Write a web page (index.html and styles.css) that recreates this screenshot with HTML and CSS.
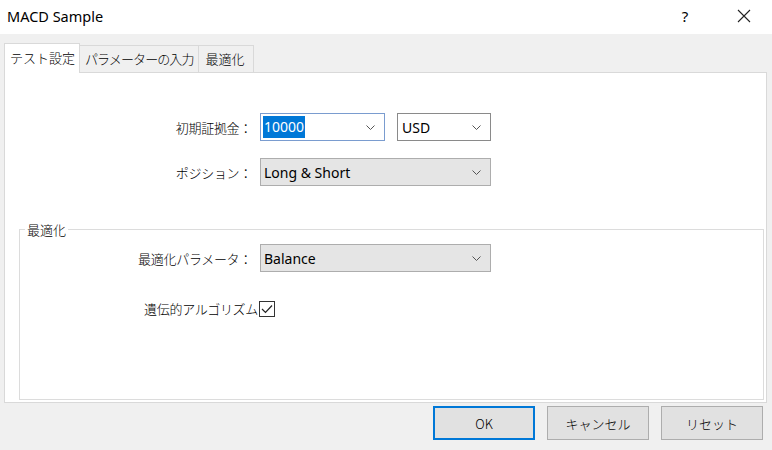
FILE: index.html
```html
<!DOCTYPE html>
<html lang="ja">
<head>
<meta charset="utf-8">
<title>MACD Sample</title>
<link rel="stylesheet" href="styles.css">
</head>
<body>
<div class="window">
  <header class="titlebar">
    <span class="title">MACD Sample</span>
    <div class="title-btns">
      <span class="help">?</span>
      <span class="close"><svg width="14" height="14" viewBox="0 0 14 14"><path d="M1 1 L13 13 M13 1 L1 13" stroke="#222" stroke-width="1.1" fill="none"/></svg></span>
    </div>
  </header>
  <div class="content">
    <div class="tabs">
      <div class="tab active">テスト設定</div>
      <div class="tab tab-param">パラメーターの入力</div>
      <div class="tab tab-opt">最適化</div>
    </div>
    <div class="panel">
      <div class="form top-form">
        <label class="lbl">初期証拠金：</label>
        <div class="pair">
          <div class="combo edit focus w125"><span class="val"><span class="sel">10000</span></span><svg class="chev" width="9" height="5" viewBox="0 0 9 5"><path d="M0.5 0.5 L4.5 4.5 L8.5 0.5" stroke="#555" stroke-width="1" fill="none"/></svg></div>
          <div class="combo edit w94"><span class="val">USD</span><svg class="chev" width="9" height="5" viewBox="0 0 9 5"><path d="M0.5 0.5 L4.5 4.5 L8.5 0.5" stroke="#555" stroke-width="1" fill="none"/></svg></div>
        </div>
        <label class="lbl">ポジション：</label>
        <div class="combo ro w231"><span class="val">Long &amp; Short</span><svg class="chev" width="9" height="5" viewBox="0 0 9 5"><path d="M0.5 0.5 L4.5 4.5 L8.5 0.5" stroke="#555" stroke-width="1" fill="none"/></svg></div>
      </div>
      <fieldset class="group">
        <legend>最適化</legend>
        <div class="form group-form">
          <label class="lbl">最適化パラメータ：</label>
          <div class="combo ro w231"><span class="val">Balance</span><svg class="chev" width="9" height="5" viewBox="0 0 9 5"><path d="M0.5 0.5 L4.5 4.5 L8.5 0.5" stroke="#555" stroke-width="1" fill="none"/></svg></div>
          <label class="lbl chk-lbl">遺伝的アルゴリズム</label>
          <div class="chk-cell"><span class="checkbox"><svg width="12" height="10" viewBox="0 0 12 10"><path d="M1 5 L4.5 8.5 L11 1.5" stroke="#222" stroke-width="1.2" fill="none"/></svg></span></div>
        </div>
      </fieldset>
    </div>
    <div class="buttons">
      <button class="btn default">OK</button>
      <button class="btn">キャンセル</button>
      <button class="btn">リセット</button>
    </div>
  </div>
</div>
</body>
</html>
```
FILE: styles.css
```css
* { box-sizing: border-box; }
html, body { margin: 0; padding: 0; }
body {
  width: 772px;
  height: 450px;
  overflow: hidden;
  background: #f0f0f0;
  font-family: "Noto Sans", "Noto Sans CJK JP", sans-serif;
  font-size: 13px;
  color: #000;
}
.window { width: 772px; height: 450px; display: flex; flex-direction: column; }
.titlebar {
  height: 34px;
  background: #fff;
  display: flex;
  align-items: center;
  justify-content: space-between;
  padding-left: 7px;
}
.title { font-size: 14.5px; font-family: "Noto Sans", sans-serif; margin-top: -2px; }
.title-btns { display: flex; align-items: center; height: 34px; }
.help {
  width: 46px; text-align: center; font-size: 15px;
  font-family: "Noto Sans", sans-serif; margin-top: -3px; margin-right: 13px;
}
.close { width: 46px; height: 34px; display: flex; align-items: center; justify-content: center; margin-right: 5px; margin-top: -2px; }
.content { padding: 0 5px 0 4px; flex: 1; display: flex; flex-direction: column; }
.tabs { display: flex; align-items: flex-end; height: 29px; margin-top: 9px; position: relative; z-index: 1; }
.tab {
  font-family: "Noto Sans CJK JP", sans-serif;
  font-size: 13px;
  font-weight: 300;
  height: 27px;
  line-height: 25px;
  padding: 0 5px;
  border: 1px solid #d9d9d9;
  border-bottom: none;
  border-left: none;
  background: #f0f0f0;
  color: #000;
  white-space: nowrap;
}
.tab.active {
  height: 30px;
  line-height: 28px;
  background: #fff;
  border-left: 1px solid #d9d9d9;
  margin-bottom: -1px;
  padding: 0 4px 0 5px;
}
.tab-param { letter-spacing: -0.9px; padding: 0 4px 0 5px; }
.tab-opt { padding: 0 8px 0 7px; }
.panel {
  height: 331px;
  background: #fff;
  border: 1px solid #d9d9d9;
  padding-top: 40px;
  display: flex;
  flex-direction: column;
}
.form { display: grid; column-gap: 8px; align-items: center; }
.top-form { grid-template-columns: 247px auto; row-gap: 17px; }
.group-form { grid-template-columns: 227px auto; row-gap: 22px; padding-top: 6px; }
.lbl {
  font-family: "Noto Sans CJK JP", sans-serif;
  font-size: 13px;
  font-weight: 300;
  text-align: right;
  white-space: nowrap;
  letter-spacing: -0.3px;
}
.pair { display: flex; gap: 12px; }
.combo {
  height: 28px;
  display: flex;
  align-items: center;
  justify-content: space-between;
  padding: 0 9px 0 2px;
  font-family: "Noto Sans", sans-serif;
  font-size: 14px;
  border: 1px solid #adadad;
}
.combo .val { display: flex; align-items: center; }
.combo.edit { background: #fff; border-color: #8a8a8a; }
.combo.edit.focus { border-color: #7a9ccf; }
.combo.ro { background: #e5e5e5; }
.w125 { width: 125px; }
.w94 { width: 94px; padding-left: 4px; }
.w231 { width: 231px; }
.combo.ro .val { padding-left: 1px; }
.sel { background: #0078d7; color: #fff; padding: 1px 1px 2px 1px; line-height: 19px; }
.chev { flex: none; }
.group {
  margin: 35px 2px 0 14px;
  padding: 0 0 0 5px;
  border: 1px solid #dcdcdc;
  height: 179px;
  min-width: 0;
}
.group legend {
  font-family: "Noto Sans CJK JP", sans-serif;
  font-size: 13px;
  font-weight: 300;
  padding: 0 2px;
  line-height: 17px;
}
.chk-lbl { margin-right: -6px; }
.chk-cell { display: flex; align-items: center; height: 28px; padding-top: 1px; }
.checkbox {
  width: 16px; height: 16px;
  border: 1px solid #333;
  background: #fff;
  display: flex; align-items: center; justify-content: center;
  margin-left: -1px;
}
.buttons {
  display: flex;
  justify-content: flex-end;
  gap: 12px;
  margin-top: 3px;
  padding-right: 4px;
}
.btn {
  width: 102px;
  height: 34px;
  background: #e1e1e1;
  border: 1px solid #adadad;
  font-family: "Noto Sans CJK JP", "Noto Sans", sans-serif;
  font-size: 13px;
  font-weight: 300;
  color: #000;
  padding: 0;
  margin: 0;
}
.btn.default { border: 2px solid #0078d7; }
```
